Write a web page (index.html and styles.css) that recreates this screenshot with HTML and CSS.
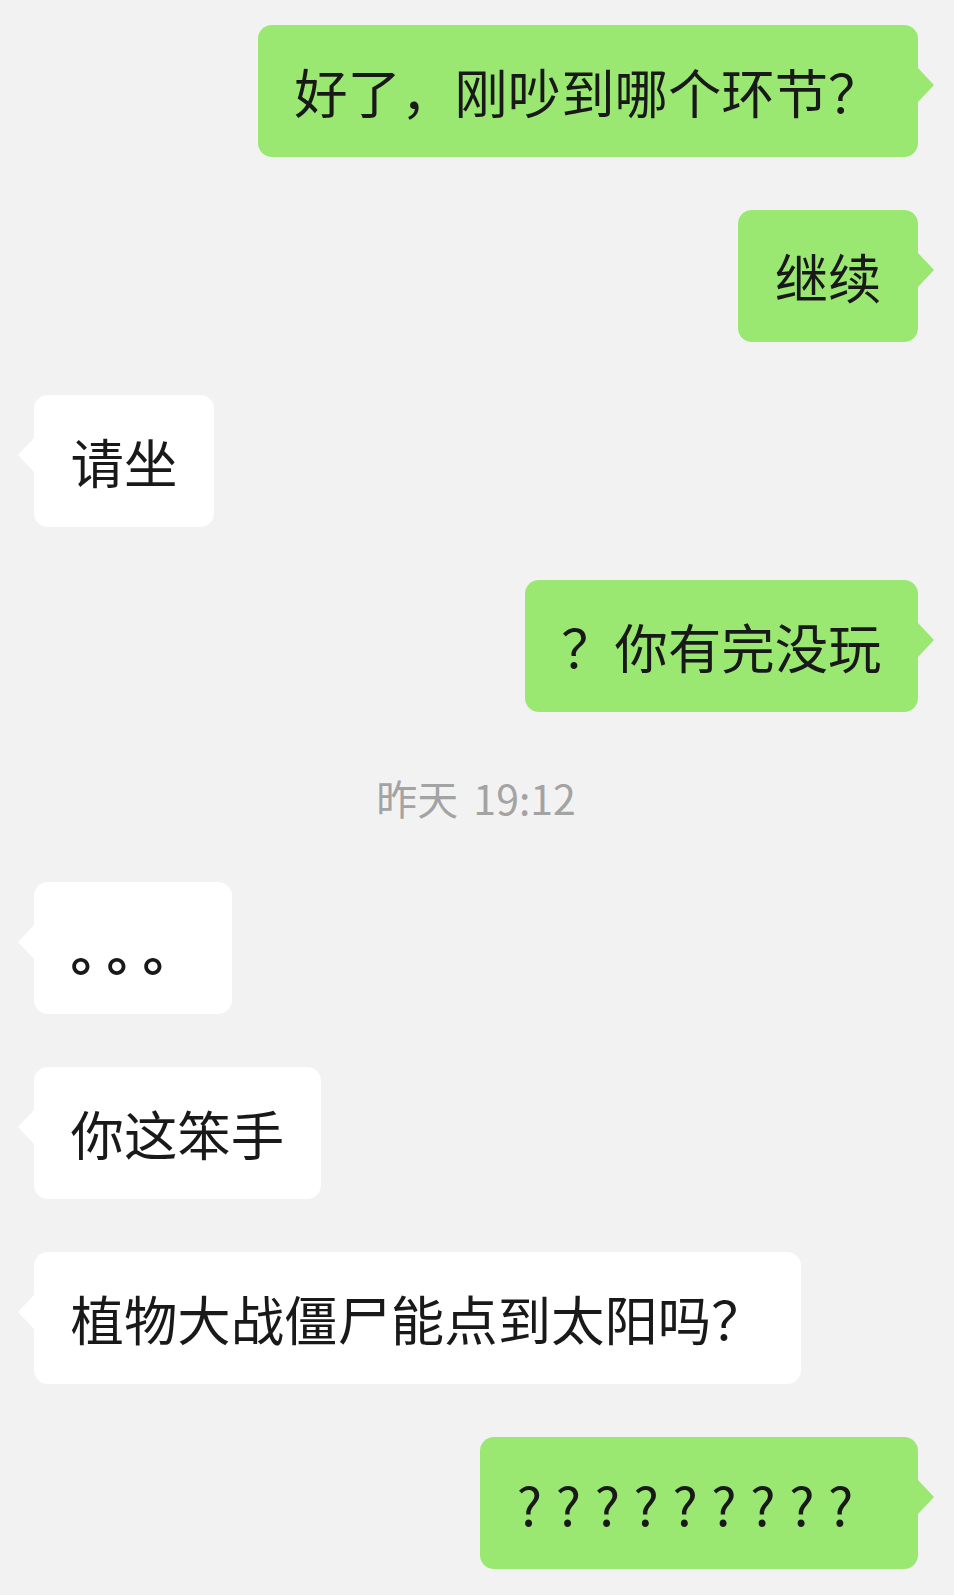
FILE: index.html
```html
<!DOCTYPE html>
<html lang="zh-CN">
<head>
  <meta charset="UTF-8">
  <meta name="viewport" content="width=device-width, initial-scale=1.0">
  <title>聊天记录</title>
  <link rel="stylesheet" href="styles.css">
</head>
<body>
<div class="chat">
  <div class="row me"><div class="bubble">好了，刚吵到哪个环节？</div></div>
  <div class="row me"><div class="bubble">继续</div></div>
  <div class="row them"><div class="bubble">请坐</div></div>
  <div class="row me"><div class="bubble">？你有完没玩</div></div>

  <div class="time">昨天 19:12</div>

  <div class="row them"><div class="bubble dots">。。。</div></div>
  <div class="row them"><div class="bubble">你这笨手</div></div>
  <div class="row them"><div class="bubble">植物大战僵尸能点到太阳吗？</div></div>
  <div class="row me"><div class="bubble marks">?????????</div></div>
</div>
</body>
</html>
```

FILE: styles.css
```css
body {
  margin: 0;
  background-color: #f2f2f2;
  font-family: "Noto Sans CJK SC", "Noto Sans", sans-serif;
  color: #191919;
}
.chat {
  display: flex;
  flex-direction: column;
  gap: 53px;
  padding: 25px 36px 25px 34px;
}
.row {
  display: flex;
}
.row.me {
  justify-content: flex-end;
}
.bubble {
  position: relative;
  font-size: 53.4px;
  line-height: 74px;
  padding: 29px 36.5px;
  border-radius: 14px;
  background-color: #fff;
  white-space: nowrap;
}
.me .bubble {
  background-color: #9ae872;
}
.bubble::before {
  content: "";
  position: absolute;
  top: 43px;
  border-top: 17px solid transparent;
  border-bottom: 17px solid transparent;
}
.them .bubble::before {
  left: -16px;
  border-right: 16px solid #fff;
}
.me .bubble::before {
  right: -16px;
  border-left: 16px solid #9ae872;
}
.dots {
  font-weight: bold;
  text-spacing-trim: space-all;
  letter-spacing: -17.4px;
  padding-right: 54px;
}
.marks {
  letter-spacing: 13.6px;
  padding-right: 51px;
}
.time {
  text-align: center;
  font-size: 41px;
  line-height: 64px;
  word-spacing: 6px;
  color: #a3a3a3;
}
```
